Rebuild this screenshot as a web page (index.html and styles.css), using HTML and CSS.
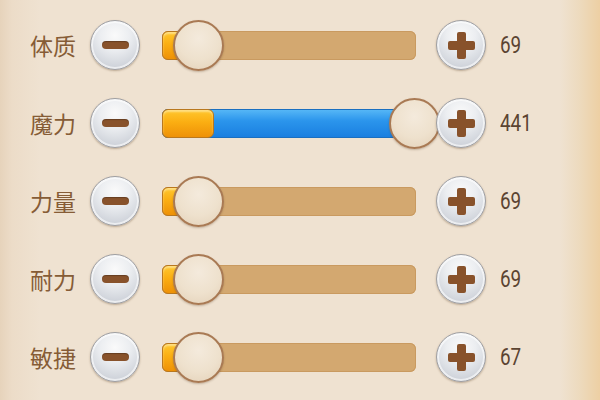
FILE: index.html
```html
<!DOCTYPE html>
<html lang="zh">

<head>
    <meta charset="UTF-8">
    <meta name="viewport" content="width=device-width, initial-scale=1.0">
    <title>属性</title>
    <link rel="stylesheet" href="styles.css">
</head>

<body>

    <div class="panel">
        <div class="row">
            <div class="label">体质</div>
            <button class="btn minus"><span></span></button>
            <div class="track">
                <div class="base"></div>
                <div class="thumb" style="left: 11px"></div>
            </div>
            <button class="btn plus"><span></span></button>
            <div class="value">69</div>
        </div>
        <div class="row">
            <div class="label">魔力</div>
            <button class="btn minus"><span></span></button>
            <div class="track">
                <div class="extra" style="width: 254px"></div>
                <div class="base"></div>
                <div class="thumb" style="left: 227px"></div>
            </div>
            <button class="btn plus"><span></span></button>
            <div class="value">441</div>
        </div>
        <div class="row">
            <div class="label">力量</div>
            <button class="btn minus"><span></span></button>
            <div class="track">
                <div class="base"></div>
                <div class="thumb" style="left: 11px"></div>
            </div>
            <button class="btn plus"><span></span></button>
            <div class="value">69</div>
        </div>
        <div class="row">
            <div class="label">耐力</div>
            <button class="btn minus"><span></span></button>
            <div class="track">
                <div class="base"></div>
                <div class="thumb" style="left: 11px"></div>
            </div>
            <button class="btn plus"><span></span></button>
            <div class="value">69</div>
        </div>
        <div class="row">
            <div class="label">敏捷</div>
            <button class="btn minus"><span></span></button>
            <div class="track">
                <div class="base"></div>
                <div class="thumb" style="left: 11px"></div>
            </div>
            <button class="btn plus"><span></span></button>
            <div class="value">67</div>
        </div>
    </div>

</body>

</html>
```

FILE: styles.css
```css
/* Page background: parchment with warm edges */
body {
    margin: 0;
    width: 600px;
    height: 400px;
    overflow: hidden;
    font-family: "Noto Sans CJK SC", "Noto Sans", sans-serif;
    background: linear-gradient(to right, #e6d3bb 0, #ecdcc8 12px, #efe2d1 40px, #efe2d1 560px, #eddabd 580px, #edcfa3 600px);
}

.panel {
    padding: 6px 0 0 30px;
}

/* One attribute row */
.row {
    display: flex;
    align-items: center;
    height: 78px;
}

.label {
    width: 46px;
    font-size: 23px;
    color: #865c36;
    white-space: nowrap;
}

/* Round grey buttons */
.btn {
    position: relative;
    width: 50px;
    height: 50px;
    padding: 0;
    border-radius: 50%;
    border: 1px solid #9f9fa2;
    background: radial-gradient(circle at 50% 30%, #fafafa 0, #eceef1 35%, #d0d4db 75%, #c0c5cd 100%);
    box-shadow: 0 1px 2px rgba(90, 60, 30, 0.35), inset 0 0 0 2px rgba(255, 255, 255, 0.6);
    display: flex;
    justify-content: center;
    align-items: center;
    flex-shrink: 0;
}

.minus {
    margin-left: 14px;
}

.minus span {
    width: 27px;
    height: 8px;
    border-radius: 4px;
    background: #88522b;
    box-shadow: inset 0 1px 1px rgba(0, 0, 0, 0.25);
}

.plus {
    margin-left: 20px;
}

.plus span {
    position: relative;
    width: 27px;
    height: 9px;
    border-radius: 2px;
    background: #88522b;
}

.plus span::after {
    content: "";
    position: absolute;
    left: 9px;
    top: -9px;
    width: 9px;
    height: 27px;
    border-radius: 2px;
    background: #88522b;
}

/* Slider track */
.track {
    position: relative;
    margin-left: 22px;
    width: 254px;
    height: 29px;
    border-radius: 6px;
    background: #d3a870;
    box-shadow: inset 0 0 0 1px #c99a60;
}

.base,
.extra {
    position: absolute;
    left: 0;
    top: 0;
    height: 29px;
    border-radius: 6px;
    box-sizing: border-box;
}

.base {
    width: 52px;
    border: 1px solid #b9781e;
    background: linear-gradient(#ffc72e 0, #fbae12 45%, #ee9107 100%);
    box-shadow: inset 0 2px 2px rgba(255, 240, 190, 0.6);
}

.extra {
    border: 1px solid #1a6fc0;
    background: linear-gradient(#55b6f6 0, #2b95ec 40%, #1a7fe0 100%);
}

.thumb {
    position: absolute;
    top: -11px;
    width: 51px;
    height: 51px;
    box-sizing: border-box;
    border-radius: 50%;
    border: 2px solid #a97a54;
    background: radial-gradient(circle at 50% 35%, #f4eadc 0, #eee1cd 55%, #e3d0b7 100%);
    box-shadow: 0 1px 2px rgba(90, 60, 30, 0.3);
}

.value {
    margin-left: 14px;
    font-family: Roboto, "Liberation Sans", sans-serif;
    font-size: 23px;
    color: #5b4431;
    transform: scaleX(0.82);
    transform-origin: left center;
}
```
